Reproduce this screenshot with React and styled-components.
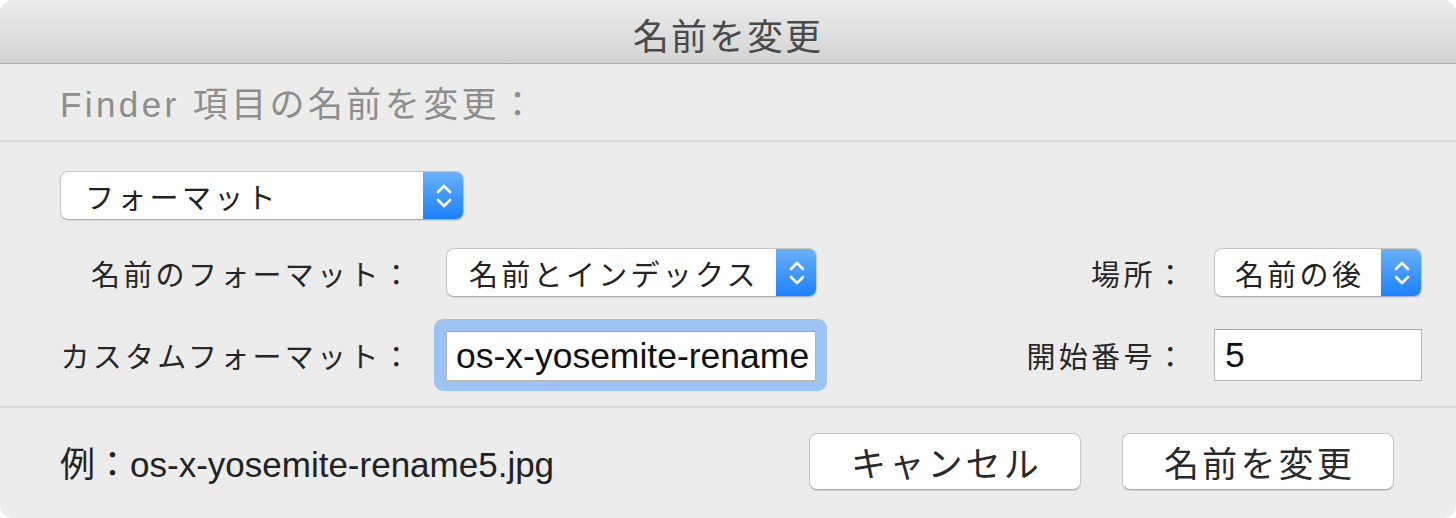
import React from "react";
import styled, { createGlobalStyle } from "styled-components";

const Global = createGlobalStyle`
  html, body { margin: 0; padding: 0; background: #ffffff; }
  body { font-family: "Liberation Sans", "Noto Sans CJK JP", sans-serif; }
  * { box-sizing: border-box; }
`;

const Window = styled.div`
  width: 1456px;
  height: 518px;
  background: #ececec;
  border-radius: 13px;
  overflow: hidden;
  display: flex;
  flex-direction: column;
  color: #262626;
`;

const TitleBar = styled.div`
  height: 64px;
  flex: none;
  display: flex;
  align-items: center;
  justify-content: center;
  background: linear-gradient(#ececec, #d3d3d3);
  border-bottom: 1px solid #adadad;
  font-size: 36px;
  color: #4a4a4a;
  letter-spacing: 2px;
  padding-top: 4px;
`;

const Header = styled.div`
  height: 78px;
  flex: none;
  display: flex;
  align-items: center;
  padding-left: 60px;
  padding-bottom: 2px;
  font-size: 35px;
  color: #8d8d8d;
  letter-spacing: 3.4px;
  border-bottom: 2px solid #d8d8d8;
`;

const Body = styled.div`
  flex: none;
  height: 266px;
  padding: 29px 34px 0 60px;
  display: flex;
  flex-direction: column;
  border-bottom: 2px solid #d8d8d8;
`;

const Grid = styled.div`
  display: grid;
  grid-template-columns: 360px 371px 1fr 208px;
  grid-template-rows: 49px 50px;
  column-gap: 26px;
  row-gap: 33px;
  align-items: center;
  margin-top: 28px;
`;

const Label = styled.div`
  font-size: 29px;
  letter-spacing: 3.3px;
  text-align: right;
  white-space: nowrap;
  padding-right: ${(p) => p.$pr || 0}px;
`;

const PopupBox = styled.div`
  width: ${(p) => p.$w}px;
  height: 49px;
  display: flex;
  background: #ffffff;
  border: 1px solid #c8c8c8;
  border-bottom-color: #b0b0b0;
  border-radius: 8px;
  box-shadow: 0 1px 1px rgba(0, 0, 0, 0.08);
  overflow: hidden;
`;

const PopupText = styled.div`
  flex: 1;
  display: flex;
  align-items: center;
  padding-left: ${(p) => p.$pl}px;
  font-size: 29px;
  letter-spacing: 3.3px;
  white-space: nowrap;
  color: #222;
`;

const Stepper = styled.div`
  width: 41px;
  flex: none;
  display: flex;
  align-items: center;
  justify-content: center;
  background: linear-gradient(#6ab2fb, #1b7ffb);
  margin: -1px -1px -1px 0;
`;

const FocusRing = styled.div`
  width: 393px;
  margin-left: -12px;
  padding: 12px 11px 10px 12px;
  border-radius: 9px;
  background: #9cc3f1;
`;

const Field = styled.div`
  height: ${(p) => p.$h || 50}px;
  width: ${(p) => (p.$w ? p.$w + "px" : "100%")};
  background: #ffffff;
  border: 1px solid #b5b5b5;
  border-top-color: #a5a5a5;
  display: flex;
  align-items: center;
  padding-left: ${(p) => p.$pl || 9}px;
  font-size: 35.5px;
  color: #111;
  white-space: nowrap;
  overflow: hidden;
`;

const RightCell = styled.div`
  display: flex;
  justify-content: flex-end;
  align-items: center;
`;

const Footer = styled.div`
  flex: 1;
  display: flex;
  align-items: center;
  padding: 0 62px 4px 60px;
`;

const Example = styled.div`
  flex: 1;
  font-size: 35px;
  color: #222;
  white-space: nowrap;
`;

const Colon = styled.span`
  letter-spacing: -6px;
  margin-right: 6px;
`;

const Buttons = styled.div`
  display: flex;
  gap: 41px;
`;

const Button = styled.div`
  width: 272px;
  height: 57px;
  display: flex;
  align-items: center;
  justify-content: center;
  background: #ffffff;
  border: 1px solid #c6c6c6;
  border-bottom-color: #a9a9a9;
  border-radius: 8px;
  box-shadow: 0 1px 1px rgba(0, 0, 0, 0.1);
  font-size: 35px;
  letter-spacing: 3.2px;
  padding-left: 3px;
  color: #2a2a2a;
`;

const Chevrons = () => (
  <svg width="18" height="30" viewBox="0 0 18 30" fill="none">
    <path d="M3 11 L9 5 L15 11" stroke="#fff" strokeWidth="2.6" strokeLinecap="round" strokeLinejoin="round" />
    <path d="M3 19 L9 25 L15 19" stroke="#fff" strokeWidth="2.6" strokeLinecap="round" strokeLinejoin="round" />
  </svg>
);

const Popup = ({ w, pl, children }) => (
  <PopupBox $w={w}>
    <PopupText $pl={pl}>{children}</PopupText>
    <Stepper>
      <Chevrons />
    </Stepper>
  </PopupBox>
);

export default function App() {
  return (
    <>
      <Global />
      <Window>
        <TitleBar>名前を変更</TitleBar>
        <Header>Finder 項目の名前を変更：</Header>
        <Body>
          <Popup w={404} pl={24}>フォーマット</Popup>
          <Grid>
            <Label $pr={6}>名前のフォーマット：</Label>
            <Popup w={371} pl={22}>名前とインデックス</Popup>
            <RightCell>
              <Label>場所：</Label>
            </RightCell>
            <Popup w={208} pl={20}>名前の後</Popup>

            <Label $pr={6}>カスタムフォーマット：</Label>
            <FocusRing>
              <Field $h={50}>os-x-yosemite-rename</Field>
            </FocusRing>
            <RightCell>
              <Label>開始番号：</Label>
            </RightCell>
            <Field $w={208} $h={52} $pl={10}>5</Field>
          </Grid>
        </Body>
        <Footer>
          <Example>
            例<Colon>：</Colon>os-x-yosemite-rename5.jpg
          </Example>
          <Buttons>
            <Button>キャンセル</Button>
            <Button>名前を変更</Button>
          </Buttons>
        </Footer>
      </Window>
    </>
  );
}
